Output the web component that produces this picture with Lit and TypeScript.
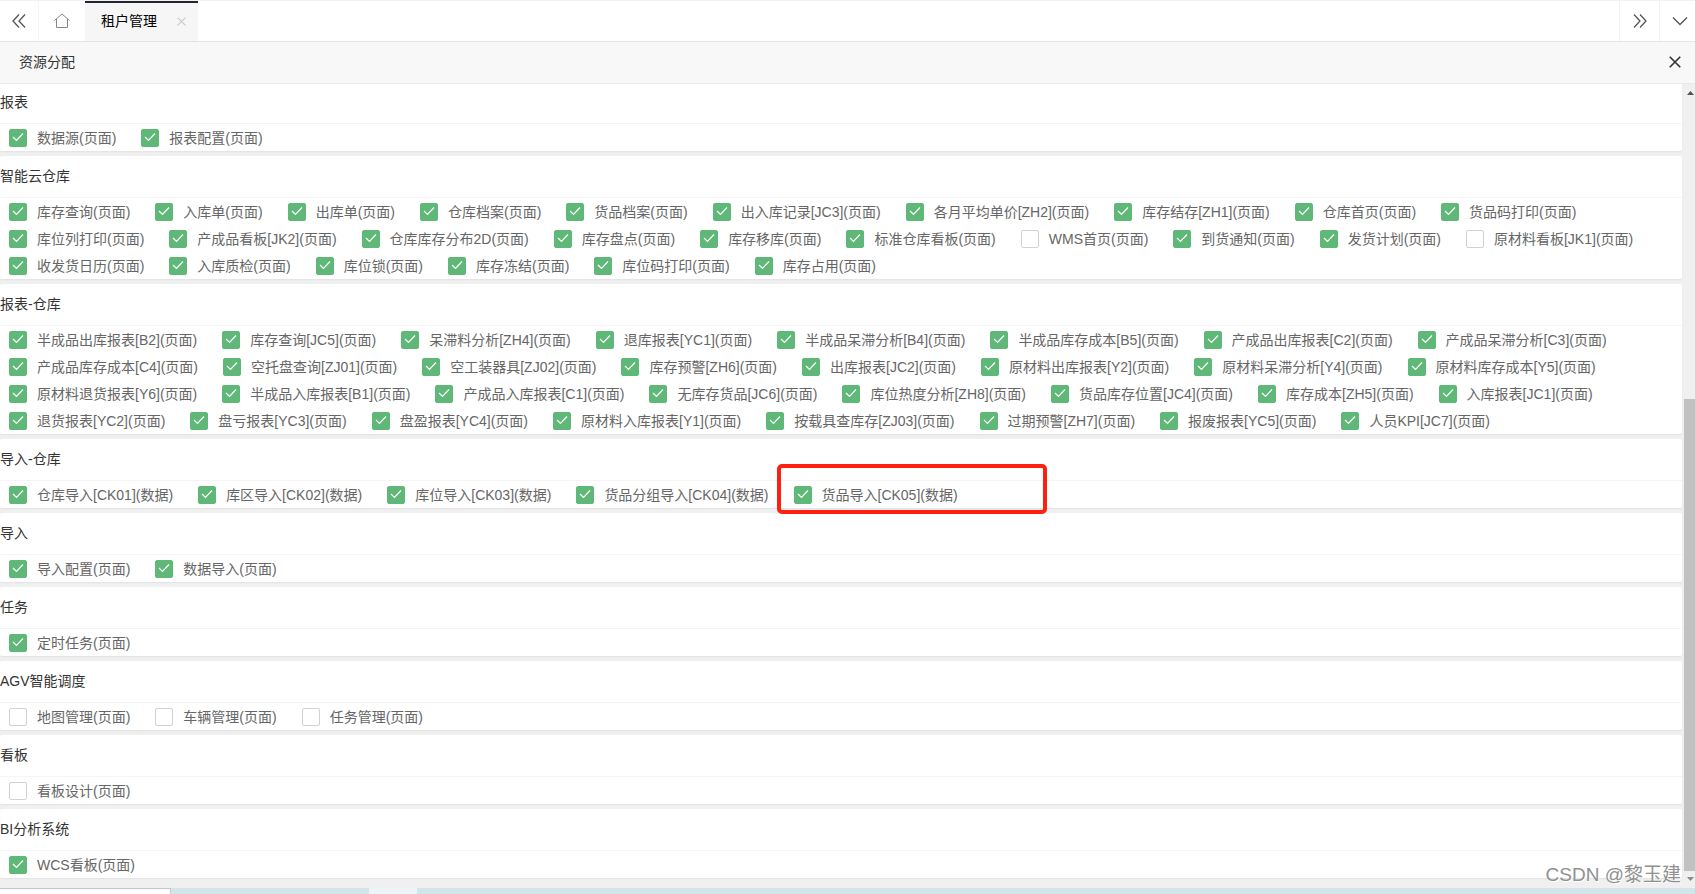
import { LitElement, html, css, svg } from "lit";
import { customElement, property, state } from "lit/decorators.js";

interface Resource {
  name: string;
  checked: boolean;
  marked: boolean;
}
interface Group {
  title: string;
  items: Resource[];
}

// A leading "-" marks an unassigned resource, "!" a highlighted one.
const group = (title: string, kind: string, names: string): Group => ({
  title,
  items: names.split(" ").map((n) => ({
    name: `${n.replace(/^[-!]/, "")}(${kind})`,
    checked: !n.startsWith("-"),
    marked: n.startsWith("!"),
  })),
});

const GROUPS: Group[] = [
  group("报表", "页面", "数据源 报表配置"),
  group(
    "智能云仓库",
    "页面",
    "库存查询 入库单 出库单 仓库档案 货品档案 出入库记录[JC3] 各月平均单价[ZH2] 库存结存[ZH1] 仓库首页 货品码打印 " +
      "库位列打印 产成品看板[JK2] 仓库库存分布2D 库存盘点 库存移库 标准仓库看板 -WMS首页 到货通知 发货计划 -原材料看板[JK1] " +
      "收发货日历 入库质检 库位锁 库存冻结 库位码打印 库存占用"
  ),
  group(
    "报表-仓库",
    "页面",
    "半成品出库报表[B2] 库存查询[JC5] 呆滞料分析[ZH4] 退库报表[YC1] 半成品呆滞分析[B4] 半成品库存成本[B5] 产成品出库报表[C2] 产成品呆滞分析[C3] " +
      "产成品库存成本[C4] 空托盘查询[ZJ01] 空工装器具[ZJ02] 库存预警[ZH6] 出库报表[JC2] 原材料出库报表[Y2] 原材料呆滞分析[Y4] 原材料库存成本[Y5] " +
      "原材料退货报表[Y6] 半成品入库报表[B1] 产成品入库报表[C1] 无库存货品[JC6] 库位热度分析[ZH8] 货品库存位置[JC4] 库存成本[ZH5] 入库报表[JC1] " +
      "退货报表[YC2] 盘亏报表[YC3] 盘盈报表[YC4] 原材料入库报表[Y1] 按载具查库存[ZJ03] 过期预警[ZH7] 报废报表[YC5] 人员KPI[JC7]"
  ),
  group("导入-仓库", "数据", "仓库导入[CK01] 库区导入[CK02] 库位导入[CK03] 货品分组导入[CK04] !货品导入[CK05]"),
  group("导入", "页面", "导入配置 数据导入"),
  group("任务", "页面", "定时任务"),
  group("AGV智能调度", "页面", "-地图管理 -车辆管理 -任务管理"),
  group("看板", "页面", "-看板设计"),
  group("BI分析系统", "页面", "WCS看板"),
];

const icon = (size: number, shape: unknown) => html`<svg
  width=${size}
  height=${size}
  viewBox="0 0 16 16"
  fill="none"
  stroke="currentColor"
  aria-hidden="true"
>
  ${shape}
</svg>`;

const ICONS = {
  left: svg`<path d="M8 1.500 2 8l6 6.500M14 1.500 8 8l6 6.500" stroke-width="1.300"/>`,
  right: svg`<path d="M2 1.500 8 8l-6 6.500M8 1.500 14 8l-6 6.500" stroke-width="1.300"/>`,
  down: svg`<path d="M1 4.500 8 11.500l7-7" stroke-width="1.300"/>`,
  home: svg`<path d="M.5 7.500 8 1l7.500 6.500M2.500 6v8.500h11V6" stroke-width="1"/>`,
  close: svg`<path d="M2 2l12 12M14 2 2 14" stroke-width="1.900"/>`,
  thin: svg`<path d="M1 1l14 14M15 1 1 15" stroke-width="2"/>`,
};

@customElement("resource-check")
class ResourceCheck extends LitElement {
  @property() name = "";
  @property({ type: Boolean }) checked = false;
  @property({ type: Boolean }) marked = false;

  static styles = css`
    :host {
      display: block;
    }
    .item {
      position: relative;
      display: flex;
      align-items: center;
      height: 27px;
      gap: 10px;
      white-space: nowrap;
      cursor: pointer;
    }
    .box {
      appearance: none;
      box-sizing: border-box;
      width: 18px;
      height: 18px;
      margin: 0;
      border: 1px solid #d2d2d2;
      border-radius: 2px;
      background: #fff;
      cursor: pointer;
    }
    .box:checked {
      border-color: #5fb878;
      background: #5fb878;
    }
    .tick {
      position: absolute;
      left: 3px;
      top: 7px;
      color: #fff;
      pointer-events: none;
    }
    .mark {
      position: absolute;
      left: -17px;
      top: -17px;
      box-sizing: border-box;
      width: 270px;
      height: 50px;
      border: 4px solid #fb2011;
      border-radius: 5px;
      pointer-events: none;
    }
  `;

  private toggle(e: Event) {
    this.checked = (e.target as HTMLInputElement).checked;
  }

  render() {
    return html`<label class="item">
      <input class="box" type="checkbox" .checked=${this.checked} @change=${this.toggle} />
      ${this.checked
        ? html`<svg class="tick" width="12" height="12" viewBox="0 0 12 12" fill="none" stroke="currentColor" aria-hidden="true">
            <path d="M1 6l3.500 3.500L11 2.500" stroke-width="1.200" />
          </svg>`
        : ""}
      <span>${this.name}</span>
      ${this.marked ? html`<span class="mark"></span>` : ""}
    </label>`;
  }
}

@customElement("app-root")
class AppRoot extends LitElement {
  @state() private groups = GROUPS;

  static styles = css`
    :host {
      display: flex;
      flex-direction: column;
      height: 100vh;
      overflow: hidden;
      position: relative;
      background: #f0f0f0;
      color: #333;
      font: 14px/20px "Liberation Sans", "Noto Sans CJK SC", sans-serif;
    }
    button {
      display: grid;
      place-items: center;
      padding: 0;
      border: 0;
      background: none;
      color: inherit;
      font: inherit;
      cursor: pointer;
    }
    .tabs {
      display: flex;
      flex: none;
      height: 40px;
      border-top: 1px solid #f2f2f2;
      border-bottom: 1px solid #e4e4e4;
      background: #fff;
      color: #555;
    }
    .nav {
      width: 39px;
      border-right: 1px solid #f6f6f6;
    }
    .home {
      width: 46px;
      color: #888;
    }
    .tab {
      display: flex;
      align-items: center;
      gap: 20px;
      box-sizing: border-box;
      padding: 0 12px 2px 16px;
      border-top: 2px solid #23262e;
      background: #f6f6f6;
      color: #000;
    }
    .tab-close {
      color: #c8c8c8;
    }
    .fill {
      flex: 1;
    }
    .next,
    .more {
      width: 40px;
      border-left: 1px solid #f2f2f2;
    }
    .more {
      width: 36px;
      padding-left: 4px;
    }
    .title {
      display: flex;
      flex: none;
      align-items: center;
      justify-content: space-between;
      height: 40px;
      padding: 0 13px 1px 19px;
      border-bottom: 1px solid #eaeaea;
      background: #f8f8f8;
    }
    .name {
      margin: 0;
      font: inherit;
    }
    .body {
      display: flex;
      flex: 1;
      min-height: 0;
      overflow: hidden;
    }
    .list {
      display: flex;
      flex: 1;
      flex-direction: column;
      gap: 5px;
      margin-top: -2px;
    }
    .card {
      flex: none;
      border-radius: 2px;
      background: #fff;
      box-shadow: 0 1px 2px rgba(0, 0, 0, 0.06);
    }
    .head {
      margin: 0;
      border-bottom: 1px solid #f4f4f4;
      font: inherit;
      line-height: 41px;
    }
    .items {
      display: flex;
      flex-wrap: wrap;
      column-gap: 25px;
      padding: 0 9px;
      color: #666;
    }
    .bar {
      display: flex;
      flex-direction: column;
      align-items: flex-end;
      width: 13px;
      color: #505050;
    }
    .arrow {
      flex: none;
      width: 9px;
      height: 13px;
    }
    .track {
      display: flex;
      flex: 1;
      align-items: flex-end;
      width: 11px;
    }
    .thumb {
      width: 11px;
      height: 61%;
      background: #c1c1c1;
    }
    .foot {
      display: flex;
      flex: none;
      height: 6px;
      border-top: 4px solid #f0f0f0;
      background: #d3e4ea;
    }
    .foot-a {
      box-sizing: border-box;
      width: 171px;
      border: solid #c6c6c6;
      border-width: 1px 1px 0 0;
      background: #fff;
    }
    .foot-b {
      width: 48px;
      margin-left: 198px;
      background: #ecf4f8;
    }
    .credit {
      position: absolute;
      right: 14px;
      bottom: 6px;
      color: #909090;
      font-size: 19px;
      line-height: 26px;
      text-shadow: 1px 1px 0 #fff;
    }
  `;

  render() {
    return html`
      <nav class="tabs">
        <button class="nav" aria-label="向左">${icon(16, ICONS.left)}</button>
        <button class="home" aria-label="首页">${icon(16, ICONS.home)}</button>
        <div class="tab">
          <span>租户管理</span>
          <button class="tab-close" aria-label="关闭标签">${icon(9, ICONS.thin)}</button>
        </div>
        <span class="fill"></span>
        <button class="next" aria-label="向右">${icon(16, ICONS.right)}</button>
        <button class="more" aria-label="更多">${icon(16, ICONS.down)}</button>
      </nav>
      <header class="title">
        <h1 class="name">资源分配</h1>
        <button class="close" aria-label="关闭">${icon(14, ICONS.close)}</button>
      </header>
      <main class="body">
        <div class="list">
          ${this.groups.map(
            (g) => html`<section class="card">
              <h2 class="head">${g.title}</h2>
              <div class="items">
                ${g.items.map(
                  (i) => html`<resource-check .name=${i.name} .checked=${i.checked} .marked=${i.marked}></resource-check>`
                )}
              </div>
            </section>`
          )}
        </div>
        <div class="bar" aria-hidden="true">
          <svg class="arrow" viewBox="0 0 9 13" fill="currentColor"><path d="M1 11h7L4.500 7z" /></svg>
          <div class="track"><div class="thumb"></div></div>
          <svg class="arrow" viewBox="0 0 9 13" fill="#8a8a8a"><path d="M1 6h7L4.500 10z" /></svg>
        </div>
      </main>
      <footer class="foot">
        <span class="foot-a"></span>
        <span class="foot-b"></span>
      </footer>
      <div class="credit">CSDN @黎玉建</div>
    `;
  }
}
